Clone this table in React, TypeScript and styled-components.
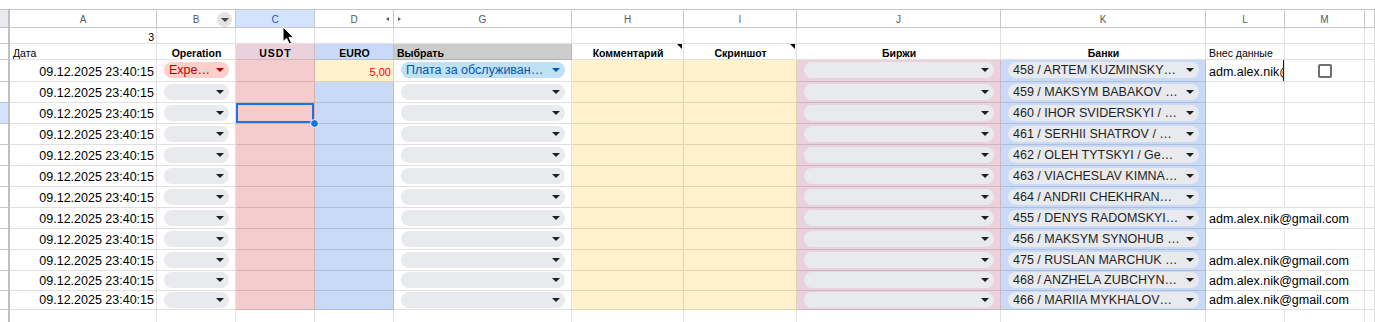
import React from 'react';
import styled, { createGlobalStyle, css } from 'styled-components';

const Font = '"Liberation Sans", Arial, sans-serif';
const GridLine = 'rgba(0, 0, 0, 0.12)';
const HeadLine = '#c4c7c5';
const Pink = '#f4cccc';
const Mauve = '#ead1dc';
const Blue = '#c9daf8';
const Cream = '#fff2cc';
const Grey = '#cccccc';
const SelectBlue = '#1a73e8';

const columns = ['', 'A', 'B', 'C', 'D', 'G', 'H', 'I', 'J', 'K', 'L', 'M', ''];
const stamp = '09.12.2025 23:40:15';
const email = 'adm.alex.nik@gmail.com';

type Row = {
  op?: string
  euro?: string
  pick?: string
  bank: string
  email?: boolean
  check?: boolean
};

const rows: Row[] = [
  { op: 'Expe…', euro: '5,00', pick: 'Плата за обслуживан…', bank: '458 / ARTEM KUZMINSKY…', check: true },
  { bank: '459 / MAKSYM BABAKOV …' },
  { bank: '460 / IHOR SVIDERSKYI / …' },
  { bank: '461 / SERHII SHATROV / …' },
  { bank: '462 / OLEH TYTSKYI / Ge…' },
  { bank: '463 / VIACHESLAV KIMNA…' },
  { bank: '464 / ANDRII CHEKHRAN…' },
  { bank: '455 / DENYS RADOMSKYI…', email: true },
  { bank: '456 / MAKSYM SYNOHUB …' },
  { bank: '475 / RUSLAN MARCHUK …', email: true },
  { bank: '468 / ANZHELA ZUBCHYN…', email: true },
  { bank: '466 / MARIIA MYKHALOV…', email: true }
];

const selectedRow = 2;

const App = () => (
  <>
    <GlobalStyle />
    <Page>
      <TopBar />
      <Sheet>
        {columns.map((letter, i) => i === 0
          ? <Corner key={'corner'} />
          : (
            <ColHead key={`col-${i}`} $active={letter === 'C'}>
              {letter}
              {letter === 'B' && <MenuDot><Caret $color={'#444746'} /></MenuDot>}
              {letter === 'D' && <HiddenArrow $side={'right'} />}
              {letter === 'G' && <HiddenArrow $side={'left'} />}
            </ColHead>
          ))}

        <RowHead />
        <Cell $align={'right'}><SmallText>3</SmallText></Cell>
        {columns.slice(2).map((_, i) => <Cell key={`r1-${i}`} />)}

        <RowHead />
        <Cell><SmallText>Дата</SmallText></Cell>
        <Cell $align={'center'}><HeadText>Operation</HeadText></Cell>
        <Cell $align={'center'} $bg={Mauve}><HeadText $spaced>USDT</HeadText></Cell>
        <Cell $align={'center'} $bg={Blue}><HeadText>EURO</HeadText></Cell>
        <Cell $bg={Grey}><HeadText>Выбрать</HeadText></Cell>
        <Cell $align={'center'}><HeadText>Комментарий</HeadText><NoteMark /></Cell>
        <Cell $align={'center'}><HeadText>Скриншот</HeadText><NoteMark /></Cell>
        <Cell $align={'center'}><HeadText>Биржи</HeadText></Cell>
        <Cell $align={'center'}><HeadText>Банки</HeadText></Cell>
        <Cell><SmallText>Внес данные</SmallText></Cell>
        <Cell />
        <Cell />

        {rows.map((row, i) => (
          <React.Fragment key={`row-${i}`}>
            <RowHead $active={i === selectedRow} />
            <Cell $align={'right'}><CellText>{stamp}</CellText></Cell>
            <ChipCell>
              <Chip $tone={row.op ? 'red' : 'grey'}>
                <ChipLabel>{row.op}</ChipLabel>
                <Caret $color={row.op ? '#b10202' : '#1f1f1f'} />
              </Chip>
            </ChipCell>
            <Cell $bg={Pink} $selected={i === selectedRow}>
              {i === selectedRow && <FillHandle />}
            </Cell>
            <Cell $align={'right'} $bg={row.euro ? Cream : Blue}>
              {row.euro && <RedNumber>{row.euro}</RedNumber>}
            </Cell>
            <ChipCell>
              <Chip $tone={row.pick ? 'blue' : 'grey'}>
                <ChipLabel>{row.pick}</ChipLabel>
                <Caret $color={row.pick ? '#0a53a8' : '#1f1f1f'} />
              </Chip>
            </ChipCell>
            <Cell $bg={Cream} />
            <Cell $bg={Cream} />
            <ChipCell $bg={Mauve}>
              <Chip $tone={'grey'}><ChipLabel /><Caret $color={'#1f1f1f'} /></Chip>
            </ChipCell>
            <ChipCell $bg={Blue}>
              <Chip $tone={'grey'}><ChipLabel>{row.bank}</ChipLabel><Caret $color={'#1f1f1f'} /></Chip>
            </ChipCell>
            {row.check
              ? <Cell $clip><CellText>{email}</CellText><ClipBar /></Cell>
              : <Cell $overflow={row.email}>{row.email && <CellText>{email}</CellText>}</Cell>}
            <Cell $align={'center'}>{row.check && <Checkbox />}</Cell>
            <Cell />
          </React.Fragment>
        ))}

        <RowHead />
        {columns.slice(1).map((_, i) => <Cell key={`tail-${i}`} />)}
      </Sheet>
      <Pointer width={13} height={19} viewBox={'0 0 13 19'}>
        <path d={'M1 1 L1 15.5 L4.6 12.3 L7.2 18 L9.6 17 L7 11.4 L11.6 11.4 Z'} fill={'#000'} stroke={'#fff'} strokeWidth={1} strokeLinejoin={'round'} />
      </Pointer>
    </Page>
  </>
);

const GlobalStyle = createGlobalStyle`
  html, body {
    margin: 0;
    padding: 0;
    background: #fff;
  }
  body {
    font-family: ${Font};
    color: #000;
  }
  * {
    box-sizing: border-box;
  }
`;

const Page = styled.div`
  position: relative;
  width: 1375px;
  height: 322px;
  overflow: hidden;
  background: #fff;
`;

const TopBar = styled.div`
  height: 10px;
  border-bottom: 1px solid ${HeadLine};
`;

const Sheet = styled.div`
  display: grid;
  grid-template-columns: 10px 147px 79px 79px 79px 178px 112px 113px 204px 205px 79px 80px 1fr;
  grid-template-rows: 18px 16px 16px 22px repeat(9, 21px) 20px 19px 21px;
`;

const Corner = styled.div`
  background: #e8eaed;
  border-right: 2px solid #bdc1c6;
  border-bottom: 1px solid #bdc1c6;
`;

const ColHead = styled.div<{ $active?: boolean }>`
  position: relative;
  display: flex;
  align-items: center;
  justify-content: center;
  padding-top: 1px;
  font-size: 10px;
  color: ${({ $active }) => $active ? '#0b57d0' : '#575a5c'};
  background: ${({ $active }) => $active ? '#d3e3fd' : '#fff'};
  border-right: 1px solid ${HeadLine};
  border-bottom: 1px solid ${HeadLine};
`;

const MenuDot = styled.span`
  position: absolute;
  right: 3px;
  top: 2px;
  width: 15px;
  height: 15px;
  border-radius: 50%;
  background: #e3e3e3;
  display: flex;
  align-items: center;
  justify-content: center;
`;

const HiddenArrow = styled.span<{ $side: 'left' | 'right' }>`
  position: absolute;
  top: 7px;
  width: 0;
  height: 0;
  border-top: 2.5px solid transparent;
  border-bottom: 2.5px solid transparent;
  ${({ $side }) => $side === 'right'
    ? css`right: 4px; border-right: 3px solid #575a5c;`
    : css`left: 4px; border-left: 3px solid #575a5c;`}
`;

const RowHead = styled.div<{ $active?: boolean }>`
  background: ${({ $active }) => $active ? '#d3e3fd' : '#fff'};
  border-right: 2px solid #bdc1c6;
  border-bottom: 1px solid ${HeadLine};
`;

const Cell = styled.div<{
  $bg?: string
  $align?: 'left' | 'center' | 'right'
  $selected?: boolean
  $overflow?: boolean
  $clip?: boolean
}>`
  position: relative;
  display: flex;
  align-items: flex-end;
  justify-content: ${({ $align }) => $align === 'right' ? 'flex-end' : $align === 'center' ? 'center' : 'flex-start'};
  padding: 0 2px 1px 3px;
  min-width: 0;
  white-space: nowrap;
  background: ${({ $bg }) => $bg || 'transparent'};
  border-right: 1px solid ${({ $overflow }) => $overflow ? 'transparent' : GridLine};
  border-bottom: 1px solid ${GridLine};
  overflow: ${({ $clip }) => $clip ? 'hidden' : 'visible'};
  ${({ $selected }) => $selected && css`
    box-shadow: inset 0 0 0 2px ${SelectBlue};
  `}
`;

const ChipCell = styled(Cell)`
  align-items: center;
  padding: 0 6px 1px 7px;
`;

const CellText = styled.span`
  font-size: 12.5px;
  line-height: 15px;
  color: #000;
`;

const SmallText = styled.span`
  font-size: 10.5px;
  line-height: 10px;
  color: #000;
`;

const HeadText = styled.span<{ $spaced?: boolean }>`
  font-size: 10.5px;
  line-height: 10px;
  font-weight: bold;
  color: #000;
  letter-spacing: ${({ $spaced }) => $spaced ? '1px' : '0'};
`;

const RedNumber = styled.span`
  font-size: 11px;
  line-height: 15px;
  color: #ff0000;
`;

const NoteMark = styled.span`
  position: absolute;
  top: 0;
  right: 1px;
  width: 0;
  height: 0;
  border-top: 5px solid #000;
  border-left: 5px solid transparent;
`;

const chipTones = {
  grey: css`background: #e8eaed; color: #1f1f1f;`,
  red: css`background: #ffcfc9; color: #b10202;`,
  blue: css`background: #bfe1f6; color: #0a53a8;`
};

const Chip = styled.div<{ $tone: keyof typeof chipTones }>`
  flex: 1;
  min-width: 0;
  height: 16px;
  border-radius: 8px;
  display: flex;
  align-items: center;
  gap: 4px;
  padding: 0 5px 0 5px;
  ${({ $tone }) => chipTones[$tone]}
`;

const ChipLabel = styled.span`
  flex: 1;
  min-width: 0;
  overflow: hidden;
  text-overflow: clip;
  white-space: pre;
  font-size: 12.5px;
  line-height: 16px;
`;

const Caret = styled.span<{ $color: string }>`
  flex: none;
  width: 0;
  height: 0;
  border-left: 4px solid transparent;
  border-right: 4px solid transparent;
  border-top: 4px solid ${({ $color }) => $color};
`;

const Checkbox = styled.span`
  align-self: center;
  width: 14px;
  height: 14px;
  border: 2px solid #6f6f6f;
  border-radius: 2px;
  margin-bottom: -1px;
`;

const ClipBar = styled.span`
  position: absolute;
  right: -1px;
  top: -8px;
  bottom: 0;
  width: 2px;
  background: #1f1f1f;
`;

const FillHandle = styled.span`
  position: absolute;
  right: -5px;
  bottom: -5px;
  width: 9px;
  height: 9px;
  border-radius: 50%;
  background: ${SelectBlue};
  border: 1px solid #fff;
  z-index: 2;
`;

const Pointer = styled.svg`
  position: absolute;
  left: 282px;
  top: 26px;
`;

export default App;
